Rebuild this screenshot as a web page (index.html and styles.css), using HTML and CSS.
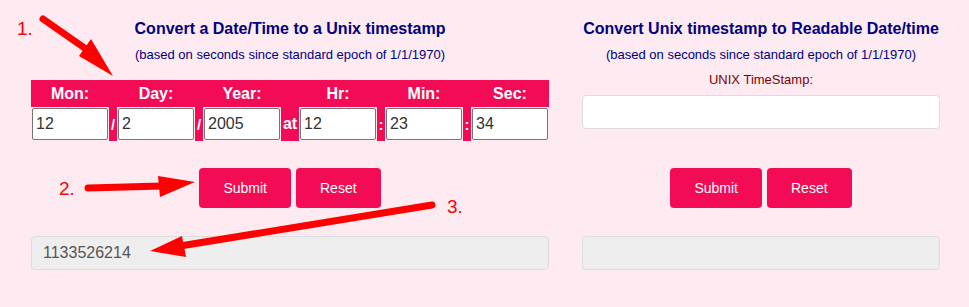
FILE: index.html
```html
<!DOCTYPE html>
<html lang="en">
<head>
  <meta charset="UTF-8">
  <meta name="viewport" content="width=device-width, initial-scale=1.0">
  <title>Unix Timestamp Converter</title>
  <link rel="stylesheet" href="styles.css">
</head>
<body>

  <div class="page">

    <!-- Date/Time to timestamp -->
    <div class="col col-left">
      <h2 class="heading">Convert a Date/Time to a Unix timestamp</h2>
      <p class="sub">(based on seconds since standard epoch of 1/1/1970)</p>

      <table class="dt">
        <tr class="head">
          <th>Mon:</th><th></th>
          <th>Day:</th><th></th>
          <th>Year:</th><th></th>
          <th>Hr:</th><th></th>
          <th>Min:</th><th></th>
          <th>Sec:</th>
        </tr>
        <tr>
          <td class="field"><input type="text" value="12"></td>
          <td class="sep">/</td>
          <td class="field"><input type="text" value="2"></td>
          <td class="sep">/</td>
          <td class="field"><input type="text" value="2005"></td>
          <td class="sep at">at</td>
          <td class="field"><input type="text" value="12"></td>
          <td class="sep">:</td>
          <td class="field"><input type="text" value="23"></td>
          <td class="sep">:</td>
          <td class="field"><input type="text" value="34"></td>
        </tr>
      </table>

      <div class="actions first">
        <button class="btn">Submit</button>
        <button class="btn">Reset</button>
      </div>

      <div class="result">1133526214</div>
    </div>

    <!-- Timestamp to date -->
    <div class="col col-right">
      <h2 class="heading">Convert Unix timestamp to Readable Date/time</h2>
      <p class="sub">(based on seconds since standard epoch of 1/1/1970)</p>
      <label class="label">UNIX TimeStamp:</label>
      <input type="text" class="box">

      <div class="actions second">
        <button class="btn">Submit</button>
        <button class="btn">Reset</button>
      </div>

      <div class="result"></div>
    </div>

  </div>

  <!-- Annotation arrows drawn over the page -->
  <svg class="notes" width="969" height="307" viewBox="0 0 969 307">
    <text x="17" y="35">1.</text>
    <line x1="43" y1="19" x2="86" y2="49" />
    <polygon points="79,56 91,39 113,76" />

    <text x="59" y="195">2.</text>
    <line x1="88" y1="188" x2="162" y2="186" />
    <polygon points="158,176 160,197 195,182" />

    <text x="447" y="213">3.</text>
    <line x1="432" y1="205" x2="180" y2="246" />
    <polygon points="182,236 186,257 150,251" />
  </svg>

</body>
</html>
```

FILE: styles.css
```css
* {
  margin: 0;
  padding: 0;
  box-sizing: border-box;
}

body {
  background-color: #fdebf1;
  font-family: "Liberation Sans", Arial, sans-serif;
  width: 969px;
  height: 307px;
  overflow: hidden;
  position: relative;
}

.page {
  display: flex;
  padding-top: 19px;
}

.col {
  display: flex;
  flex-direction: column;
  align-items: center;
}

.col-left {
  width: 518px;
  margin-left: 31px;
}

.col-right {
  width: 358px;
  margin-left: 33px;
}

.heading {
  font-size: 16px;
  line-height: 20px;
  font-weight: bold;
  color: #000080;
  white-space: nowrap;
}

.sub {
  margin-top: 8px;
  font-size: 13px;
  line-height: 16px;
  color: #000080;
  white-space: nowrap;
}

/* date fields */
.dt {
  margin-top: 17px;
  border-collapse: collapse;
}

.dt .head {
  background-color: #f30c55;
  height: 27px;
}

.dt th {
  color: white;
  font-size: 16px;
  font-weight: bold;
  padding: 0;
}

.dt td {
  padding: 1px 0 1px 1px;
  height: 34px;
}

.dt .field {
  width: 78px;
}

.dt .field input {
  width: 76px;
  height: 32px;
  font-family: "Liberation Sans", Arial, sans-serif;
  font-size: 16px;
  color: #333;
  padding: 0 3px;
  border: 1px solid #767676;
  border-radius: 2px;
  background: white;
}

.dt .sep {
  width: 8px;
  padding: 0;
  background-color: #f30c55;
  color: white;
  font-weight: bold;
  font-size: 15px;
  text-align: center;
}

.dt .sep.at {
  width: 18px;
  font-size: 16px;
}

/* right side */
.label {
  margin-top: 10px;
  font-size: 13px;
  line-height: 14px;
  color: #800000;
}

.box {
  margin-top: 8px;
  width: 358px;
  height: 34px;
  border: 1px solid #ddd;
  border-radius: 4px;
  background: white;
}

/* buttons */
.actions {
  display: flex;
  gap: 5px;
}

.actions.first {
  margin-top: 27px;
}

.actions.second {
  margin-top: 39px;
}

.btn {
  height: 40px;
  padding: 0 24px;
  border: none;
  border-radius: 4px;
  background-color: #f30c55;
  color: white;
  font-family: "Liberation Sans", Arial, sans-serif;
  font-size: 14px;
  cursor: pointer;
}

.result {
  margin-top: 28px;
  width: 100%;
  height: 34px;
  padding: 0 11px;
  border: 1px solid #ddd;
  border-radius: 4px;
  background-color: #eee;
  color: #555;
  font-size: 16px;
  line-height: 32px;
}

/* annotations */
.notes {
  position: absolute;
  left: 0;
  top: 0;
  pointer-events: none;
}

.notes text {
  fill: #ff0000;
  font-family: "Liberation Sans", Arial, sans-serif;
  font-size: 19px;
}

.notes line {
  stroke: #ff0000;
  stroke-width: 7;
  stroke-linecap: round;
}

.notes polygon {
  fill: #ff0000;
}
```
